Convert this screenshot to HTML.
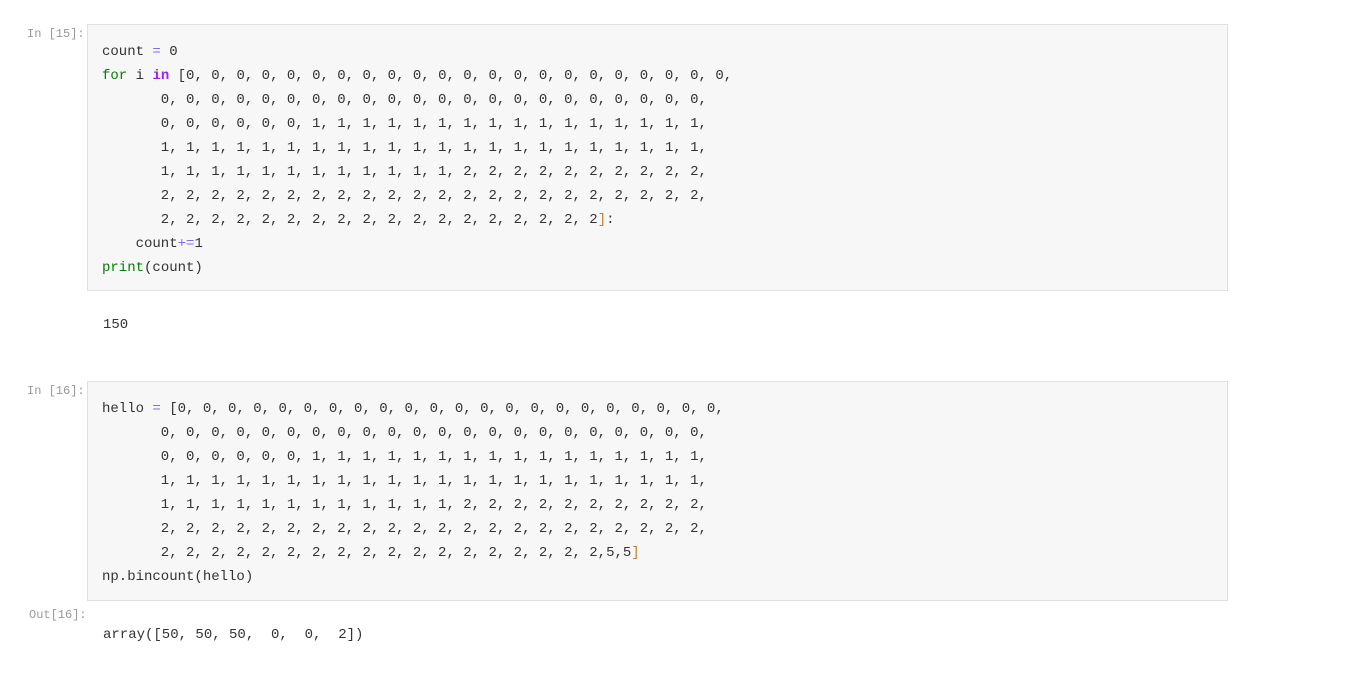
<!DOCTYPE html>
<html><head><style>
body{margin:0;background:#fff;width:1346px;height:680px;position:relative;overflow:hidden;font-family:"Liberation Mono",monospace;font-size:14px;color:#333}
.box{position:absolute;left:87px;width:1139px;background:#f7f7f7;border:1px solid #e0e0e0}
pre{position:absolute;left:102px;margin:0;font:14px/24px "Liberation Mono",monospace;color:#333}
.p{position:absolute;font:12px "Liberation Mono",monospace;color:#999}
.k{color:#008000}.o{color:#7c6cf6}.kw{color:#a020f0;font-weight:bold}.b{color:#c08030}
</style></head><body>
<div class="p" style="left:27px;top:27px">In [15]:</div>
<div class="box" style="top:24px;height:265px"></div>
<pre style="top:40px">count <span class="o">=</span> 0
<span class="k">for</span> i <span class="kw">in</span> [0, 0, 0, 0, 0, 0, 0, 0, 0, 0, 0, 0, 0, 0, 0, 0, 0, 0, 0, 0, 0, 0,
       0, 0, 0, 0, 0, 0, 0, 0, 0, 0, 0, 0, 0, 0, 0, 0, 0, 0, 0, 0, 0, 0,
       0, 0, 0, 0, 0, 0, 1, 1, 1, 1, 1, 1, 1, 1, 1, 1, 1, 1, 1, 1, 1, 1,
       1, 1, 1, 1, 1, 1, 1, 1, 1, 1, 1, 1, 1, 1, 1, 1, 1, 1, 1, 1, 1, 1,
       1, 1, 1, 1, 1, 1, 1, 1, 1, 1, 1, 1, 2, 2, 2, 2, 2, 2, 2, 2, 2, 2,
       2, 2, 2, 2, 2, 2, 2, 2, 2, 2, 2, 2, 2, 2, 2, 2, 2, 2, 2, 2, 2, 2,
       2, 2, 2, 2, 2, 2, 2, 2, 2, 2, 2, 2, 2, 2, 2, 2, 2, 2<span class="b">]</span>:
    count<span class="o">+=</span>1
<span class="k">print</span>(count)</pre>
<pre style="top:313px;left:103px">150</pre>
<div class="p" style="left:27px;top:384px">In [16]:</div>
<div class="box" style="top:381px;height:218px"></div>
<pre style="top:397px">hello <span class="o">=</span> [0, 0, 0, 0, 0, 0, 0, 0, 0, 0, 0, 0, 0, 0, 0, 0, 0, 0, 0, 0, 0, 0,
       0, 0, 0, 0, 0, 0, 0, 0, 0, 0, 0, 0, 0, 0, 0, 0, 0, 0, 0, 0, 0, 0,
       0, 0, 0, 0, 0, 0, 1, 1, 1, 1, 1, 1, 1, 1, 1, 1, 1, 1, 1, 1, 1, 1,
       1, 1, 1, 1, 1, 1, 1, 1, 1, 1, 1, 1, 1, 1, 1, 1, 1, 1, 1, 1, 1, 1,
       1, 1, 1, 1, 1, 1, 1, 1, 1, 1, 1, 1, 2, 2, 2, 2, 2, 2, 2, 2, 2, 2,
       2, 2, 2, 2, 2, 2, 2, 2, 2, 2, 2, 2, 2, 2, 2, 2, 2, 2, 2, 2, 2, 2,
       2, 2, 2, 2, 2, 2, 2, 2, 2, 2, 2, 2, 2, 2, 2, 2, 2, 2,5,5<span class="b">]</span>
np.bincount(hello)</pre>
<div class="p" style="left:29px;top:608px">Out[16]:</div>
<pre style="top:623px;left:103px">array([50, 50, 50,  0,  0,  2])</pre>
</body></html>
